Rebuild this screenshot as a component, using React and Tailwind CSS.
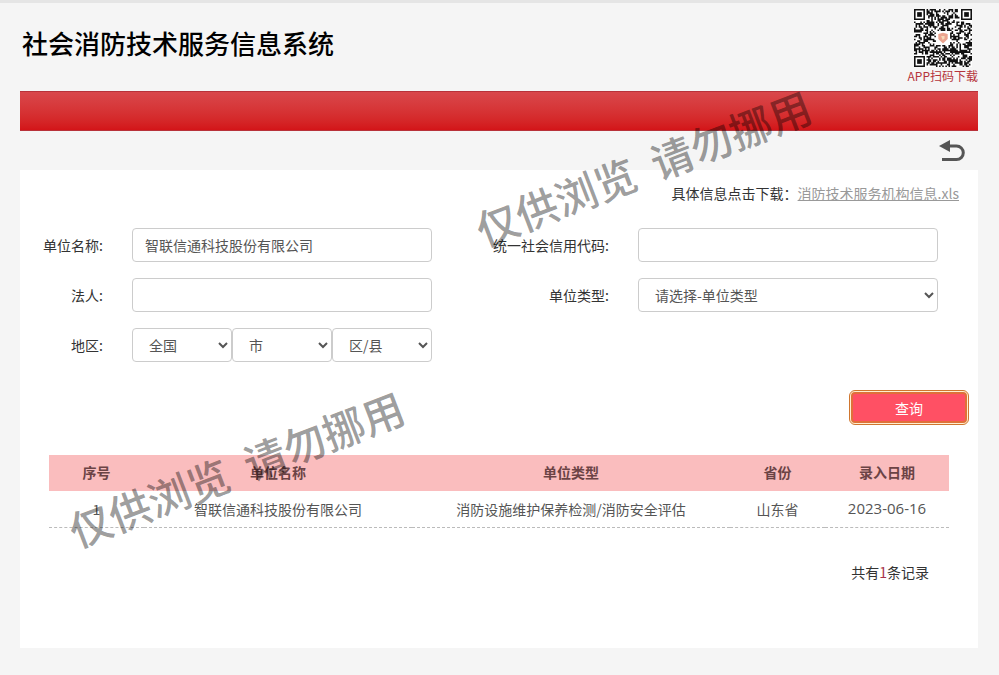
import React from "react";

const QR_SIZE = 37;

// dark modules of the app download code
function qrPath() {
  let d = "";
  let seed = 20230616;
  for (let y = 0; y < QR_SIZE; y++) {
    for (let x = 0; x < QR_SIZE; x++) {
      seed = (seed * 1103515245 + 12345) % 2147483648;
      const left = x < 8;
      const right = x > QR_SIZE - 9;
      const top = y < 8;
      const bottom = y > QR_SIZE - 9;
      if ((left && top) || (right && top) || (left && bottom)) continue;
      if (x > 13 && x < 23 && y > 13 && y < 23) continue;
      if ((seed >> 12) % 100 < 57) d += `M${x} ${y}h1v1h-1z`;
    }
  }
  return d;
}

function Finder({ x, y }) {
  return (
    <g>
      <path d={`M${x} ${y}h7v7h-7zM${x + 1} ${y + 1}v5h5v-5z`} fillRule="evenodd" />
      <path d={`M${x + 2} ${y + 2}h3v3h-3z`} />
    </g>
  );
}

function QrCode() {
  return (
    <svg viewBox="0 0 37 37" className="h-[58px] w-[58px] bg-white" fill="#111">
      <path d={qrPath()} />
      <Finder x={0} y={0} />
      <Finder x={30} y={0} />
      <Finder x={0} y={30} />
      <rect x="14" y="14" width="9" height="9" rx="1" fill="#fff" />
      <path d="M15.5 16l3-.8 3 .8v3.2l-3 2.8-3-2.8z" fill="#eba48f" />
      <path d="M17.3 17.2h2.2v1.6l-1.2 1z" fill="#f7d9b8" />
    </svg>
  );
}

function Watermark({ className }) {
  return (
    <div
      aria-hidden="true"
      className={`pointer-events-none absolute -translate-x-1/2 -translate-y-1/2 rotate-[-21deg] whitespace-pre text-[42px] leading-none font-medium text-black/40 ${className}`}
    >
      {"仅供浏览  请勿挪用"}
    </div>
  );
}

const field =
  "h-[34px] w-full min-w-0 rounded border border-[#ccc] bg-white px-3 text-sm text-[#555]";
const label = "pb-px text-right text-sm text-[#333]";

function App() {
  return (
    <div className="relative min-h-screen overflow-hidden border-t-3 border-[#e5e5e5] bg-[#f5f5f5] pr-[21px] pb-7 pl-5 font-['Noto_Sans_CJK_SC',sans-serif] text-sm text-[#333]">
      <header className="flex h-[88px] items-start justify-between">
        <h1 className="pt-5 pl-[2px] text-[26px] leading-10 font-medium text-black">
          社会消防技术服务信息系统
        </h1>
        <div className="flex flex-col items-center pt-[6px]">
          <QrCode />
          <span className="text-xs leading-[18px] text-[#b5343c]">APP扫码下载</span>
        </div>
      </header>

      {/* nav bar */}
      <div className="h-10 border-y border-[#b8323a] bg-linear-to-b from-[#d9474b] to-[#d31418]"></div>

      <div className="flex h-[39px] items-center justify-end pr-[13px]">
        <button type="button" aria-label="返回">
          <svg width="26" height="22" viewBox="0 0 26 22">
            <path d="M0 6L11 0v12z" fill="#555" />
            <path
              d="M9 6h8.500a6.800 6.800 0 0 1 0 13.600H3"
              fill="none"
              stroke="#555"
              strokeWidth="3"
            />
          </svg>
        </button>
      </div>

      <main className="min-h-[478px] bg-white pt-[13px]">
        <p className="pr-[19px] text-right leading-5">
          具体信息点击下载：
          <a href="#" className="text-[#999] underline">消防技术服务机构信息.xls</a>
        </p>

        <form onSubmit={(e) => e.preventDefault()}>
          <div className="mt-[25px] grid grid-cols-[83px_1fr_148px_1fr] items-center gap-x-[29px] gap-y-4 pr-[40px]">
            <label htmlFor="name" className={label}>单位名称:</label>
            <input id="name" className={field} defaultValue="智联信通科技股份有限公司" />
            <label htmlFor="code" className={label}>统一社会信用代码:</label>
            <input id="code" className={field} />

            <label htmlFor="legal" className={label}>法人:</label>
            <input id="legal" className={field} />
            <label htmlFor="type" className={label}>单位类型:</label>
            <select id="type" className={field}>
              <option>请选择-单位类型</option>
            </select>

            <label htmlFor="province" className={label}>地区:</label>
            <div className="flex">
              <select id="province" className={field}>
                <option>全国</option>
              </select>
              <select aria-label="市" className={field}>
                <option>市</option>
              </select>
              <select aria-label="区/县" className={field}>
                <option>区/县</option>
              </select>
            </div>
          </div>

          <div className="mt-7 flex justify-end pr-[9px]">
            <button
              type="submit"
              className="h-[35px] w-[120px] rounded-md border border-[#d0762f] bg-[#fff0d0] p-px text-white"
            >
              <span className="flex h-full items-center justify-center rounded border-2 border-[#e0703a] bg-[#ff5064]">
                查询
              </span>
            </button>
          </div>
        </form>

        <div className="mt-[30px] px-[29px]">
          <table className="w-full table-fixed text-center">
            <thead>
              <tr className="h-9 bg-[#fabdbe] text-[#6b4345]">
                <th className="w-[95px] pb-[2px] font-bold">序号</th>
                <th className="w-[268px] pb-[2px] font-bold">单位名称</th>
                <th className="pb-[2px] font-bold">单位类型</th>
                <th className="w-[95px] pb-[2px] font-bold">省份</th>
                <th className="w-[124px] pb-[2px] font-bold">录入日期</th>
              </tr>
            </thead>
            <tbody>
              <tr className="h-9 border-b border-dashed border-[#bbb] text-[#555]">
                <td>1</td>
                <td>智联信通科技股份有限公司</td>
                <td>消防设施维护保养检测/消防安全评估</td>
                <td>山东省</td>
                <td className="font-['Open_Sans',sans-serif] text-[15px]">2023-06-16</td>
              </tr>
            </tbody>
          </table>
        </div>

        <p className="mt-[34px] pr-[49px] text-right leading-5">
          共有<span className="text-[#a8324a]">1</span>条记录
        </p>
      </main>

      <Watermark className="top-[164px] left-[643px]" />
      <Watermark className="top-[465px] left-[236px]" />
    </div>
  );
}

export default App;
